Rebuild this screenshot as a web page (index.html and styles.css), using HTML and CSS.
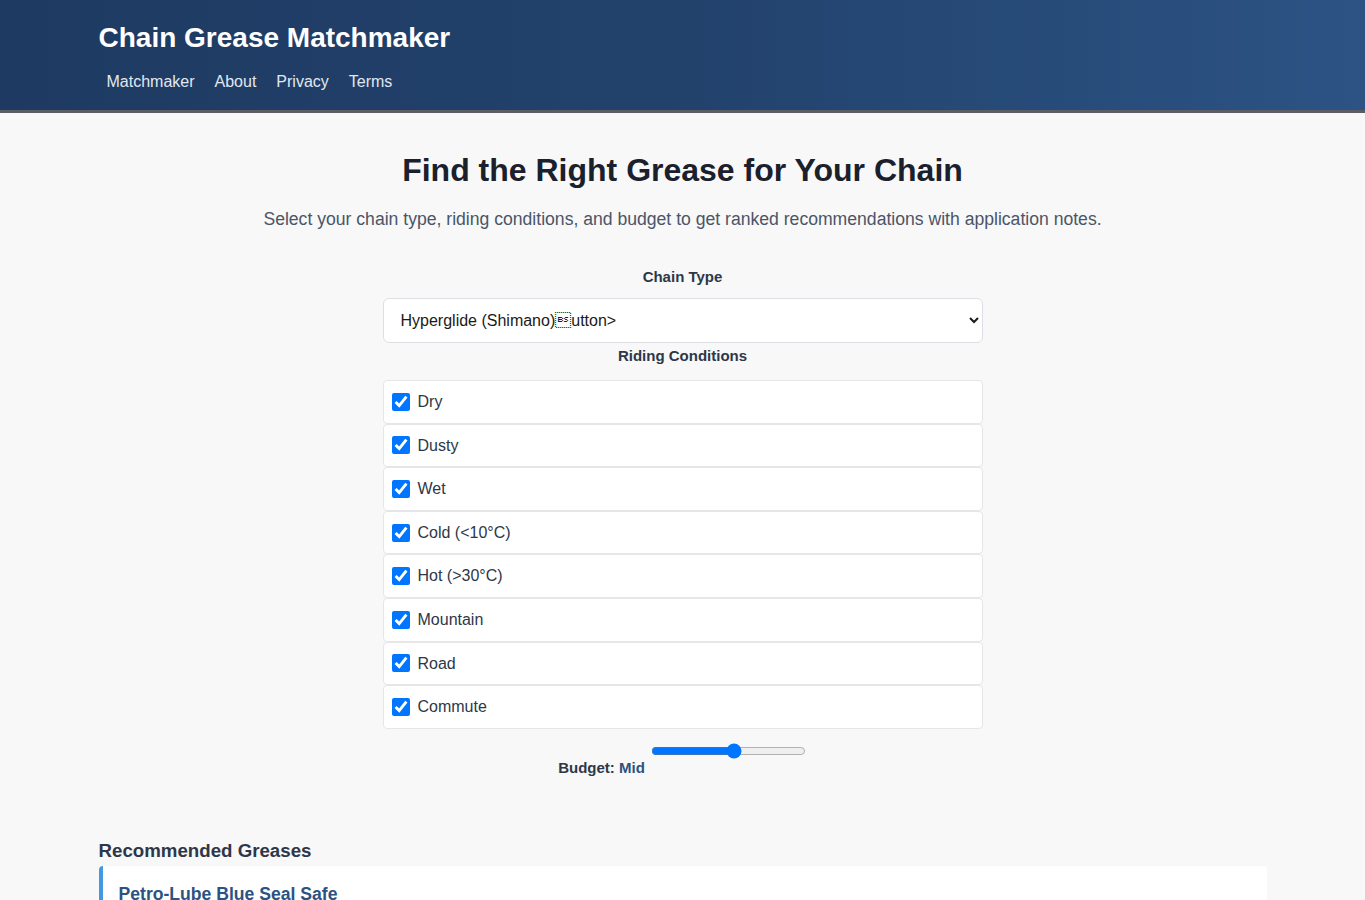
FILE: index.html
```html
<!DOCTYPE html>
<html lang="en">
<head>
    <meta charset="UTF-8">
    <meta name="viewport" content="width=device-width, initial-scale=1.0">
    <title>Chain Grease Matchmaker</title>
    <link rel="stylesheet" href="styles.css">
</head>
<body>

    <!-- Cabeçalho -->
    <header class="site-header">
        <div class="container">
            <h1 class="site-title">Chain Grease Matchmaker</h1>
            <nav class="site-nav">
                <a href="#">Matchmaker</a>
                <a href="#">About</a>
                <a href="#">Privacy</a>
                <a href="#">Terms</a>
            </nav>
        </div>
    </header>

    <main class="container main">
        <h2 class="page-title">Find the Right Grease for Your Chain</h2>
        <p class="intro">Select your chain type, riding conditions, and budget to get ranked recommendations with application notes.</p>

        <!-- Formulario -->
        <form class="matcher-form">
            <label class="field-label" for="chain-type">Chain Type</label>
            <select id="chain-type" class="chain-select">
                <option>Hyperglide (Shimano)&#8;utton&gt;</option>
            </select>

            <label class="field-label conditions-label">Riding Conditions</label>
            <div class="conditions">
                <label class="condition"><input type="checkbox" checked> Dry</label>
                <label class="condition"><input type="checkbox" checked> Dusty</label>
                <label class="condition"><input type="checkbox" checked> Wet</label>
                <label class="condition"><input type="checkbox" checked> Cold (&lt;10°C)</label>
                <label class="condition"><input type="checkbox" checked> Hot (&gt;30°C)</label>
                <label class="condition"><input type="checkbox" checked> Mountain</label>
                <label class="condition"><input type="checkbox" checked> Road</label>
                <label class="condition"><input type="checkbox" checked> Commute</label>
            </div>

            <div class="budget">
                <input type="range" class="budget-range" min="0" max="100" value="54">
                <label class="budget-label">Budget: <span class="budget-value">Mid</span></label>
            </div>
        </form>

        <!-- Resultados -->
        <section class="results">
            <h3 class="results-title">Recommended Greases</h3>
            <div class="result-card">
                <h4 class="result-name">Petro-Lube Blue Seal Safe</h4>
                <p class="result-notes">Application notes will appear here.</p>
            </div>
        </section>
    </main>

</body>
</html>
```

FILE: styles.css
```css
/* Estilos Gerais */
body {
    margin: 0;
    padding: 0;
    font-family: 'Liberation Sans', Arial, sans-serif;
    background-color: #f8f8f8;
    color: #2d3748;
}

.container {
    max-width: 1168px;
    margin: 0 auto;
    padding: 0 16px;
}

/* Cabeçalho */
.site-header {
    background: linear-gradient(90deg, #1e3a62 0%, #22426c 50%, #2c5384 100%);
    border-bottom: 3px solid #5a5d63;
    padding: 22px 0 17px;
}

.site-title {
    margin: 0;
    font-size: 28px;
    line-height: 32px;
    color: #ffffff;
}

.site-nav {
    display: flex;
    gap: 4px;
    margin-top: 17px;
}

.site-nav a {
    color: #e2e8f0;
    text-decoration: none;
    font-size: 16px;
    line-height: 22px;
    padding: 0 8px;
}

/* Conteudo */
.main {
    padding-top: 39px;
}

.page-title {
    margin: 0;
    text-align: center;
    font-size: 32px;
    line-height: 37px;
    color: #1a202c;
}

.intro {
    margin: 17px 0 0;
    text-align: center;
    font-size: 17.6px;
    line-height: 27px;
    color: #4a5568;
}

/* Formulario */
.matcher-form {
    width: 600px;
    margin: 33px auto 0;
}

.field-label {
    display: block;
    text-align: center;
    font-weight: bold;
    font-size: 15px;
    line-height: 21px;
    margin-bottom: 11px;
}

.chain-select {
    display: block;
    width: 100%;
    height: 45px;
    padding: 0 12px 0 13px;
    font-family: inherit;
    font-size: 16px;
    color: #1a1a1a;
    background-color: #ffffff;
    border: 1px solid #dcdfe3;
    border-radius: 6px;
}

.conditions-label {
    margin-top: 2px;
    margin-bottom: 14px;
}

.conditions {
    display: flex;
    flex-direction: column;
}

.condition {
    display: flex;
    align-items: center;
    gap: 8px;
    padding: 11.8px 8px;
    line-height: 17.6px;
    font-size: 16px;
    background-color: #ffffff;
    border: 1px solid #e4e6ea;
    border-radius: 4px;
    color: #2d3748;
}

.condition input {
    width: 18px;
    height: 18px;
    margin: 0;
}

/* Orcamento */
.budget {
    display: flex;
    flex-direction: column;
    align-items: center;
    margin-top: 14px;
}

.budget-range {
    width: 155px;
    margin: 0 0 0 91px;
}

.budget-label {
    font-weight: bold;
    font-size: 15px;
    line-height: 21px;
    margin: -2px 162px 0 0;
}

.budget-value {
    color: #2c5282;
}

/* Resultados */
.results {
    margin-top: 62px;
}

.results-title {
    margin: 0 0 4px;
    font-size: 18.7px;
    line-height: 22px;
    color: #2d3748;
}

.result-card {
    background-color: #ffffff;
    border-left: 4px solid #4299e1;
    border-radius: 4px;
    padding: 17px 16px 16px;
}

.result-name {
    margin: 0;
    font-size: 17.6px;
    line-height: 22px;
    color: #2c5282;
}

.result-notes {
    margin: 12px 0 0;
    font-size: 15px;
    color: #4a5568;
}
```
